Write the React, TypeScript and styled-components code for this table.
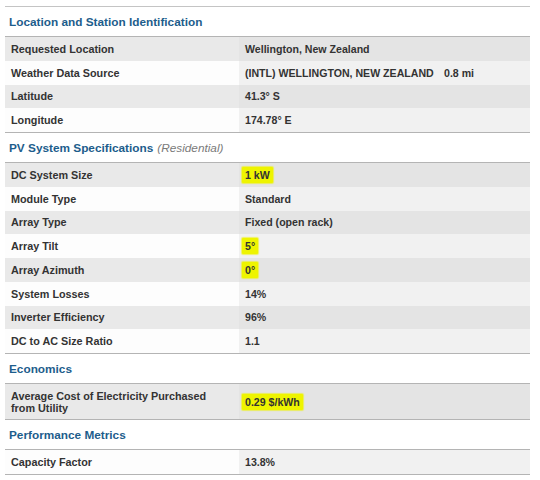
import React from "react";
import styled, { createGlobalStyle } from "styled-components";

const Global = createGlobalStyle`
  html, body { margin: 0; padding: 0; background: #ffffff; }
  body { font-family: "Liberation Sans", Arial, sans-serif; }
`;

const Page = styled.div`
  width: 525px;
  margin-left: 5px;
  padding-top: 6px;
`;

const Heading = styled.div<{ $first?: boolean }>`
  height: 29px;
  display: flex;
  align-items: center;
  padding-left: 4px;
  border-top: ${(p) => (p.$first ? "1px solid #c4c4c4" : "none")};
  font-size: 11.8px;
  font-weight: bold;
  color: #1d5d8c;
`;

const Sub = styled.span`
  font-weight: normal;
  font-style: italic;
  color: #7a7a7a;
  margin-left: 4px;
`;

const Table = styled.div`
  border-top: 1px solid #b4b4b4;
  border-bottom: 1px solid #b4b4b4;
  display: grid;
  grid-template-columns: 234px 1fr;
`;

const Label = styled.div<{ $dark: boolean; $tall?: boolean }>`
  height: ${(p) => (p.$tall ? "35px" : "23.75px")};
  display: flex;
  align-items: center;
  padding: 0 6px;
  background: ${(p) => (p.$dark ? "#e9e9e9" : "#fdfdfd")};
  font-size: 10.8px;
  font-weight: bold;
  color: #333;
  line-height: 12px;
`;

const Value = styled.div<{ $dark: boolean; $tall?: boolean }>`
  height: ${(p) => (p.$tall ? "35px" : "23.75px")};
  display: flex;
  align-items: center;
  padding: 0 6px;
  background: ${(p) => (p.$dark ? "#e4e4e4" : "#f1f1f1")};
  font-size: 10.6px;
  font-weight: bold;
  color: #333;
`;

const Mark = styled.span`
  background: #eef400;
  padding: 2px 3px;
  margin-left: -3px;
  box-shadow: 0 0 1px 1px rgba(238, 244, 0, 0.6);
  border-radius: 1px;
`;

const Station = styled.span`
  flex: 0 0 199px;
`;

type Row = { label: React.ReactNode; value: React.ReactNode; mark?: boolean; tall?: boolean };

function Rows({ rows, startDark = true }: { rows: Row[]; startDark?: boolean }) {
  return (
    <Table>
      {rows.map((r, i) => {
        const dark = startDark ? i % 2 === 0 : i % 2 === 1;
        return (
          <React.Fragment key={i}>
            <Label $dark={dark} $tall={r.tall}>{r.label}</Label>
            <Value $dark={dark} $tall={r.tall}>
              {r.mark ? <Mark>{r.value}</Mark> : r.value}
            </Value>
          </React.Fragment>
        );
      })}
    </Table>
  );
}

export default function App() {
  return (
    <>
      <Global />
      <Page>
        <Heading $first>Location and Station Identification</Heading>
        <Rows
          rows={[
            { label: "Requested Location", value: "Wellington, New Zealand" },
            {
              label: "Weather Data Source",
              value: (
                <>
                  <Station>(INTL) WELLINGTON, NEW ZEALAND</Station>
                  <span>0.8 mi</span>
                </>
              ),
            },
            { label: "Latitude", value: "41.3° S" },
            { label: "Longitude", value: "174.78° E" },
          ]}
        />
        <Heading>
          PV System Specifications<Sub>(Residential)</Sub>
        </Heading>
        <Rows
          rows={[
            { label: "DC System Size", value: "1 kW", mark: true },
            { label: "Module Type", value: "Standard" },
            { label: "Array Type", value: "Fixed (open rack)" },
            { label: "Array Tilt", value: "5°", mark: true },
            { label: "Array Azimuth", value: "0°", mark: true },
            { label: "System Losses", value: "14%" },
            { label: "Inverter Efficiency", value: "96%" },
            { label: "DC to AC Size Ratio", value: "1.1" },
          ]}
        />
        <Heading>Economics</Heading>
        <Rows
          rows={[
            {
              label: (
                <span>
                  Average Cost of Electricity Purchased
                  <br />
                  from Utility
                </span>
              ),
              value: "0.29 $/kWh",
              mark: true,
              tall: true,
            },
          ]}
        />
        <Heading>Performance Metrics</Heading>
        <Rows startDark={false} rows={[{ label: "Capacity Factor", value: "13.8%" }]} />
      </Page>
    </>
  );
}
